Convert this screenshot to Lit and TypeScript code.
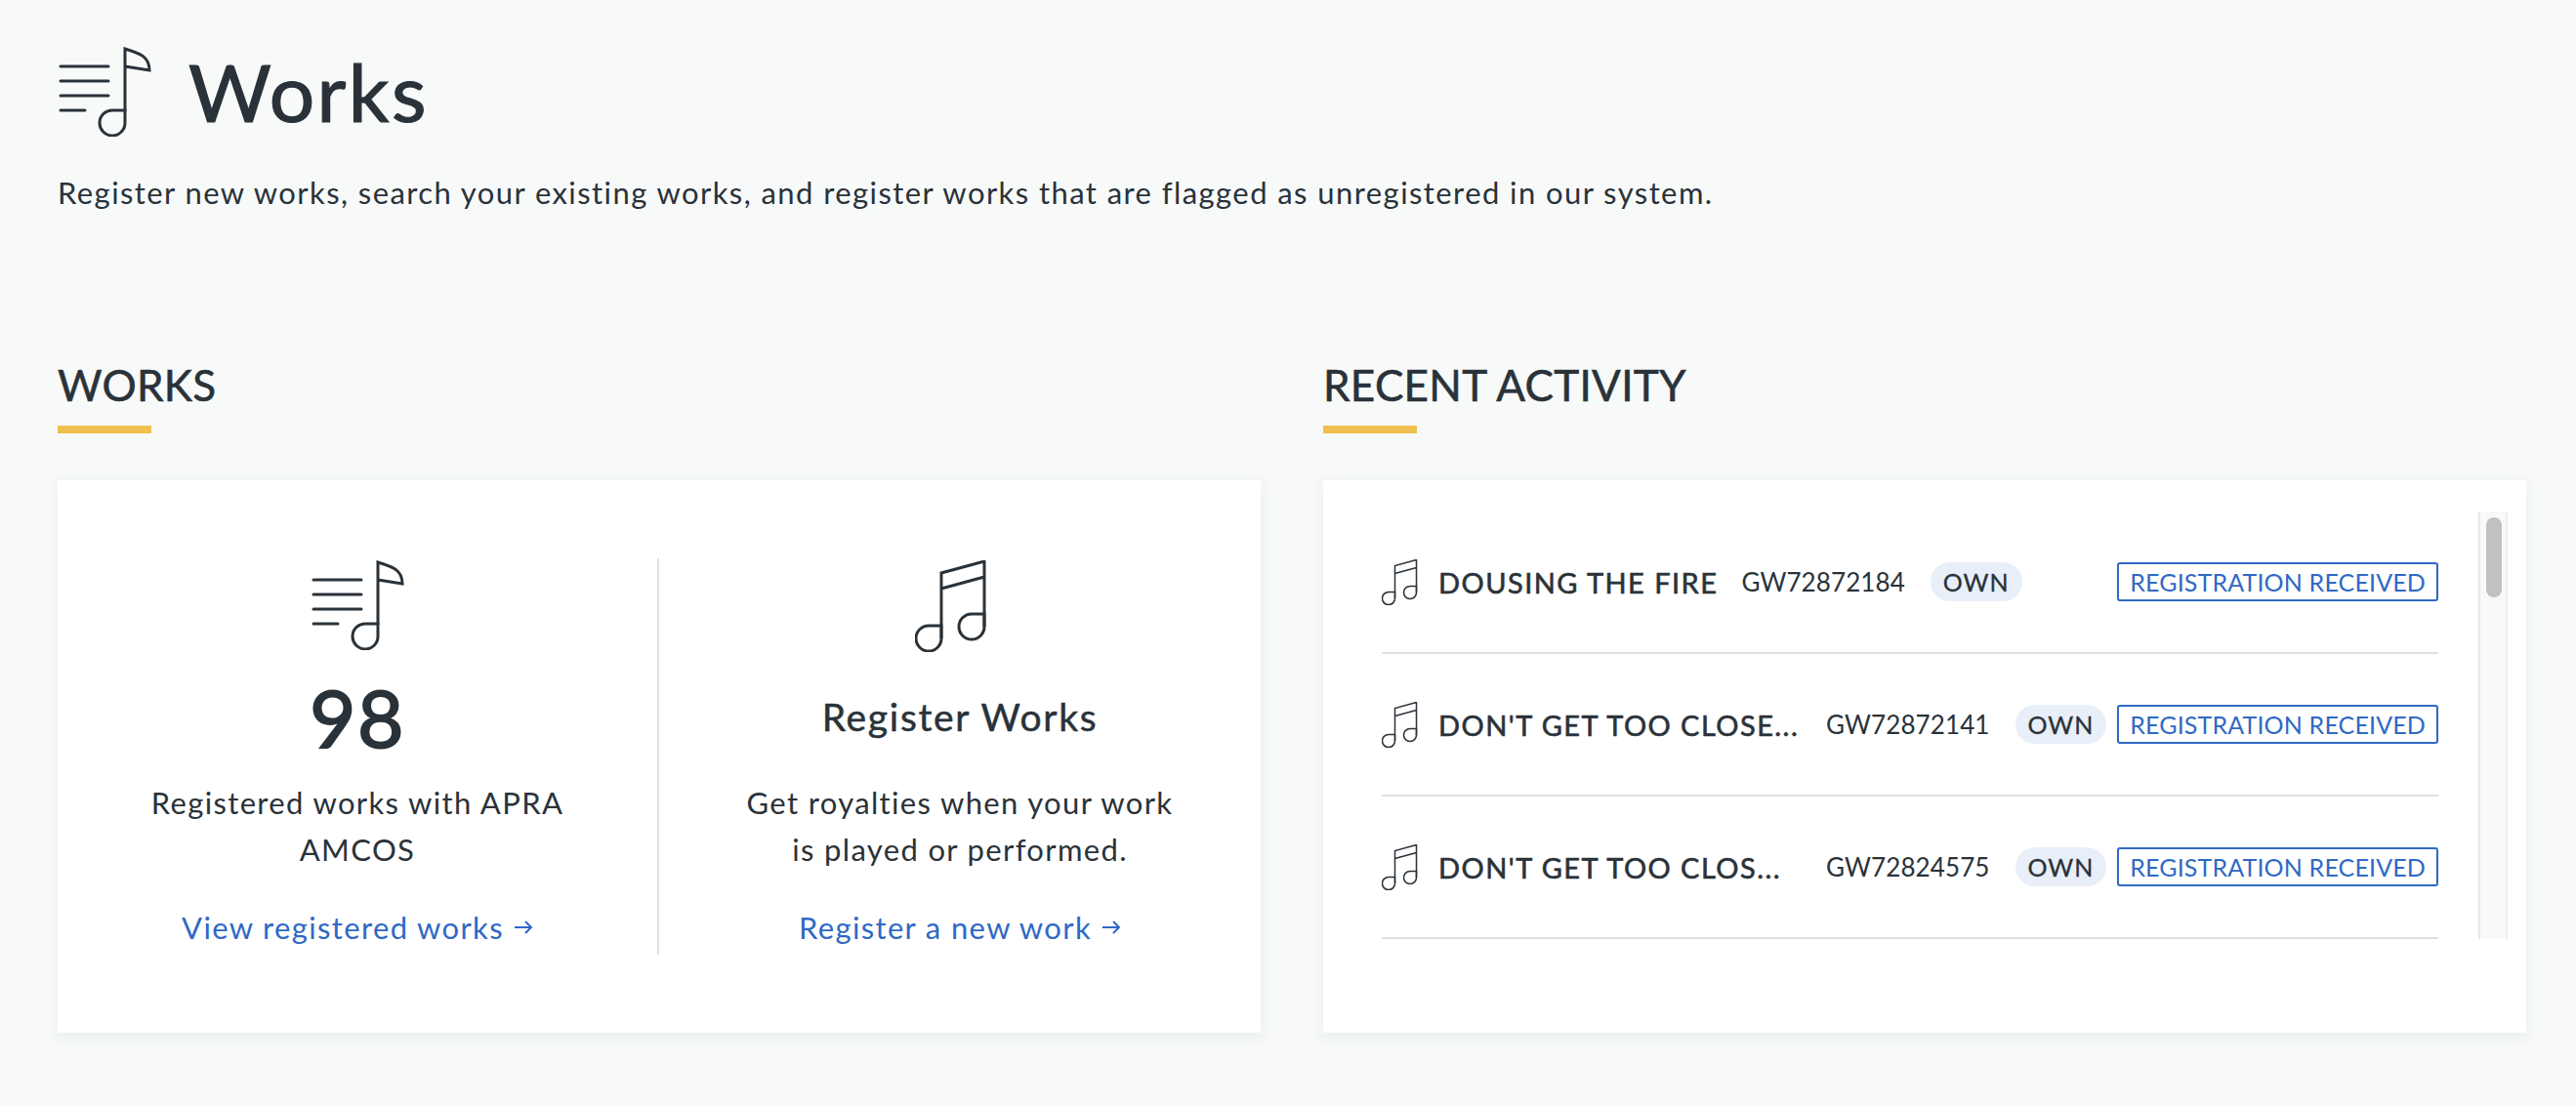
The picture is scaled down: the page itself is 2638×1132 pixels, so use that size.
import { LitElement, html, css, svg } from 'lit';
import { customElement } from 'lit/decorators.js';
import { classMap } from 'lit/directives/class-map.js';

const listNote = svg`
  <path d="M3 20H52M3 35H52M3 50H52M3 65H28" stroke-linecap="round"/>
  <path d="M69 66V2C85 7 94 10 94 24L69 20"/>
  <path d="M69 65H57A13 13 0 1 0 69 78Z"/>`;

const notes = svg`
  <path d="M27 80V13L71 1V68M27 29L71 17"/>
  <path d="M27 67H14A13 13 0 1 0 27 80Z"/>
  <path d="M71 55H58A13 13 0 1 0 71 68Z"/>`;

const rows = [
  { title: 'DOUSING THE FIRE', code: 'GW72872184', clipped: false },
  { title: "DON'T GET TOO CLOSE...", code: 'GW72872141', clipped: true },
  { title: "DON'T GET TOO CLOS...", code: 'GW72824575', clipped: true },
];

@customElement('app-root')
export class AppRoot extends LitElement {
  static styles = css`
    :host {
      display: block;
      min-height: 1132px;
      background: #f8fafa;
      color: #2a3239;
      font-family: Lato, "Noto Sans", sans-serif;
      padding: 48px 52px 0 59px;
      box-sizing: border-box;
    }
    svg { fill: none; stroke: currentColor; display: block; flex: none; }

    .title { display: flex; align-items: center; gap: 38px; }
    .title svg { width: 96px; height: 92px; stroke-width: 3; }
    h1 { margin: -3px 0 0; font-size: 82px; line-height: 92px; font-weight: 400; letter-spacing: 2.4px; -webkit-text-stroke: 1.2px currentColor; }
    .intro { margin: 37px 0 0; font-size: 31px; line-height: 40px; letter-spacing: 1.42px; }

    .columns { display: grid; grid-template-columns: 1232px 1232px; gap: 64px; margin-top: 152px; }
    h2 { margin: 0; font-size: 44px; line-height: 50px; font-weight: 400; letter-spacing: 0.3px; -webkit-text-stroke: 0.6px currentColor; }
    .bar { width: 96px; height: 8px; background: #f2c04f; margin: 17px 0 48px; }
    .card { background: #fff; height: 566px; box-sizing: border-box; box-shadow: 0 4px 14px rgba(40, 50, 60, 0.07); }

    .works { display: grid; grid-template-columns: 1fr 1fr; padding: 80px 0; }
    .col { display: flex; flex-direction: column; align-items: center; padding: 2px 0 3px; text-align: center; }
    .col:first-child { border-right: 2px solid #e2e2e2; }
    .col svg.big { width: 96px; height: 92px; stroke-width: 3; }
    .col svg.pair { width: 74px; height: 94px; stroke-width: 3; margin: 0 18px -2px 0; }
    .head { height: 132px; box-sizing: border-box; display: flex; align-items: center; padding-top: 3px; }
    .count { font-size: 82px; line-height: 80px; font-weight: 400; letter-spacing: 1.5px; -webkit-text-stroke: 1.8px currentColor; }
    .name { font-size: 39px; line-height: 50px; font-weight: 400; letter-spacing: 1.7px; -webkit-text-stroke: 0.5px currentColor; }
    .text { margin: 0; max-width: 450px; font-size: 31px; line-height: 48px; letter-spacing: 1.35px; }
    .link { display: flex; align-items: center; gap: 10px; margin-top: 32px; font-size: 31px; line-height: 48px; letter-spacing: 1.35px; color: #2f69c5; }
    .link svg { width: 20px; height: 16px; stroke-width: 2; }

    .activity { display: flex; padding: 32px 19px 0 60px; }
    .list { flex: 1; margin-right: 41px; }
    .row { display: flex; align-items: center; height: 146px; box-sizing: border-box; border-bottom: 2px solid #e0e0e0; }
    .row svg { width: 37px; height: 47px; stroke-width: 3; margin-right: 21px; }
    .song { font-size: 29px; font-weight: 400; letter-spacing: 1.45px; white-space: nowrap; -webkit-text-stroke: 0.6px currentColor; }
    .clipped .song { flex: 1; }
    .code { margin-left: 24px; font-size: 26px; letter-spacing: 0.1px; }
    .own { margin: 0 11px 0 26px; height: 40px; padding: 0 13px; display: flex; align-items: center; border-radius: 20px; background: #e8eff9; font-size: 25px; font-weight: 400; letter-spacing: 1px; -webkit-text-stroke: 0.3px currentColor; }
    .tag { margin-left: auto; height: 40px; padding: 0 11px; display: flex; align-items: center; box-sizing: border-box; border: 2px solid #2f69c5; border-radius: 3px; color: #2f69c5; font-size: 25px; letter-spacing: 0.15px; white-space: nowrap; }
    .track { width: 30px; height: 438px; box-sizing: border-box; padding: 6px 6px 0; background: #f9f9f9; border-left: 2px solid #e8e8e8; border-right: 2px solid #eeeeee; }
    .thumb { width: 16px; height: 82px; border-radius: 8px; background: #c1c1c1; }
  `;

  render() {
    return html`
      <div class="title">
        <svg viewBox="0 0 96 92">${listNote}</svg>
        <h1>Works</h1>
      </div>
      <p class="intro">Register new works, search your existing works, and register works that are flagged as unregistered in our system.</p>
      <div class="columns">
        <section>
          <h2>WORKS</h2>
          <div class="bar"></div>
          <div class="card works">
            <div class="col">
              <svg class="big" viewBox="0 0 96 92">${listNote}</svg>
              <div class="head"><span class="count">98</span></div>
              <p class="text">Registered works with APRA AMCOS</p>
              <a class="link">View registered works ${this.arrow()}</a>
            </div>
            <div class="col">
              <svg class="pair" viewBox="0 0 74 94">${notes}</svg>
              <div class="head"><span class="name">Register Works</span></div>
              <p class="text">Get royalties when your work is played or performed.</p>
              <a class="link">Register a new work ${this.arrow()}</a>
            </div>
          </div>
        </section>
        <section>
          <h2>RECENT ACTIVITY</h2>
          <div class="bar"></div>
          <div class="card activity">
            <div class="list">
              ${rows.map(r => html`
                <div class="row ${classMap({ clipped: r.clipped })}">
                  <svg viewBox="0 0 74 94">${notes}</svg>
                  <span class="song">${r.title}</span>
                  <span class="code">${r.code}</span>
                  <span class="own">OWN</span>
                  <span class="tag">REGISTRATION RECEIVED</span>
                </div>`)}
            </div>
            <div class="track"><div class="thumb"></div></div>
          </div>
        </section>
      </div>
    `;
  }

  arrow() {
    return html`<svg viewBox="0 0 20 16"><path d="M1 8H18M12 2L18 8L12 14"/></svg>`;
  }
}
